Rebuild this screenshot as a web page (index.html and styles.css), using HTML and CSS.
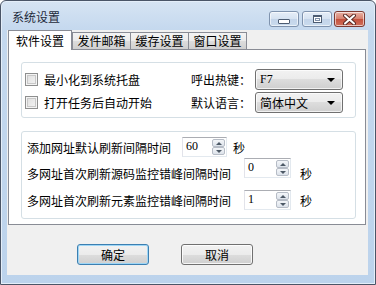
FILE: index.html
```html
<!DOCTYPE html>
<html lang="zh-CN">
<head>
  <meta charset="utf-8">
  <title>系统设置</title>
  <link rel="stylesheet" href="styles.css">
</head>
<body>
  <div class="window">
    <div class="titlebar">
      <span class="title">系统设置</span>
      <div class="caption">
        <span class="cap-btn cap-min"><span class="glyph-min"></span></span>
        <span class="cap-btn cap-max"><span class="glyph-max"></span></span>
        <span class="cap-btn cap-close">
          <svg width="13" height="11" viewBox="0 0 13 11">
            <path d="M2 1.5 L11 9.5 M11 1.5 L2 9.5" stroke="#5a2a24" stroke-width="4" stroke-linecap="round"/>
            <path d="M2 1.5 L11 9.5 M11 1.5 L2 9.5" stroke="#fff" stroke-width="2" stroke-linecap="round"/>
          </svg>
        </span>
      </div>
    </div>

    <div class="client">
      <div class="tabs">
        <span class="tab active">软件设置</span>
        <span class="tab">发件邮箱</span>
        <span class="tab">缓存设置</span>
        <span class="tab">窗口设置</span>
      </div>

      <div class="panel">
        <div class="group group-general">
          <div class="row">
            <label class="check"><span class="box"></span>最小化到系统托盘</label>
            <span class="field-label">呼出热键：</span>
            <span class="combo"><span class="combo-text latin">F7</span><span class="arrow"></span></span>
          </div>
          <div class="row">
            <label class="check"><span class="box"></span>打开任务后自动开始</label>
            <span class="field-label">默认语言：</span>
            <span class="combo"><span class="combo-text">简体中文</span><span class="arrow"></span></span>
          </div>
        </div>

        <div class="group group-refresh">
          <div class="line line-1">
            <span class="text">添加网址默认刷新间隔时间</span>
            <span class="spin"><span class="spin-value">60</span><span class="spin-btns"><span class="up"></span><span class="down"></span></span></span>
            <span class="unit">秒</span>
          </div>
          <div class="line line-2">
            <span class="text">多网址首次刷新源码监控错峰间隔时间</span>
            <span class="spin"><span class="spin-value">0</span><span class="spin-btns"><span class="up"></span><span class="down"></span></span></span>
            <span class="unit">秒</span>
          </div>
          <div class="line line-3">
            <span class="text">多网址首次刷新元素监控错峰间隔时间</span>
            <span class="spin"><span class="spin-value">1</span><span class="spin-btns"><span class="up"></span><span class="down"></span></span></span>
            <span class="unit">秒</span>
          </div>
        </div>
      </div>

      <div class="actions">
        <button class="btn btn-default">确定</button>
        <button class="btn">取消</button>
      </div>
    </div>
  </div>
</body>
</html>
```

FILE: styles.css
```css
body {
  margin: 0;
  background: #fff;
  font-family: "Noto Sans CJK SC", "Noto Sans", sans-serif;
  font-size: 12px;
  color: #000;
}
.window {
  box-sizing: border-box;
  width: 376px;
  height: 285px;
  padding: 0 7px 9px 6px;
  border: 1px solid #4a5567;
  border-radius: 6px 6px 0 0;
  background: linear-gradient(#d6e4f3, #c4d8ee 30px, #bcd3ec);
  box-shadow: inset 0 0 0 1px #e4eef9;
}
.titlebar {
  display: flex;
  justify-content: space-between;
  height: 29px;
}
.title {
  margin-left: 5px;
  padding-top: 9px;
  line-height: 14px;
  color: #1e2a3a;
}
.caption {
  display: flex;
  gap: 3px;
  margin-top: 10px;
  margin-right: 3px;
}
.cap-btn {
  box-sizing: border-box;
  display: flex;
  align-items: center;
  justify-content: center;
  width: 30px;
  height: 16px;
  border: 1px solid #7f93ae;
  border-radius: 3px;
  background: linear-gradient(#e6eef8, #d5e2f1 50%, #c3d4e9 50%, #c9dbee);
  box-shadow: inset 0 0 0 1px rgba(255,255,255,0.6);
}
.cap-close {
  width: 31px;
  margin-left: -1px;
  border-color: #7d3a32;
  background: linear-gradient(#e8b2a6, #d6806e 50%, #c4503c 50%, #d0705c);
}
.glyph-min {
  width: 10px;
  height: 3px;
  margin-top: 5px;
  border: 1px solid #4c5c72;
  background: #fff;
  border-radius: 1px;
}
.glyph-max {
  box-sizing: border-box;
  width: 9px;
  height: 8px;
  border: 1px solid #4c5c72;
  border-top-width: 2px;
  background: #fff;
  box-shadow: inset 0 0 0 1px #fff, inset 0 0 0 2px #7d8ea6;
}
.client {
  width: 361px;
  height: 245px;
  background: #f0f0f0;
}
.tabs {
  display: flex;
  align-items: flex-end;
  height: 19px;
  padding-left: 1px;
}
.tab {
  box-sizing: border-box;
  width: 59px;
  height: 17px;
  margin-left: -1px;
  border: 1px solid #898c95;
  border-bottom: none;
  background: linear-gradient(#f3f3f3, #ebebeb 50%, #dddddd 50%, #d0d0d0);
  text-align: center;
  line-height: 16px;
}
.tab.active {
  position: relative;
  z-index: 1;
  width: 64px;
  height: 20px;
  margin-left: 0;
  margin-right: 1px;
  margin-bottom: -1px;
  background: #fff;
  line-height: 20px;
}
.panel {
  box-sizing: border-box;
  width: 358px;
  height: 176px;
  margin-left: 1px;
  padding: 12px 0 0 12px;
  border: 1px solid #898c95;
  background: #fff;
}
.group {
  box-sizing: border-box;
  width: 335px;
  border: 1px solid #d5dfe5;
  border-radius: 3px;
}
.group-general {
  height: 56px;
  padding: 6px 0 0 3px;
}
.row {
  display: flex;
  align-items: center;
  height: 21px;
  margin-bottom: 2px;
}
.check {
  display: flex;
  align-items: center;
  gap: 6px;
  width: 166px;
}
.box {
  box-sizing: border-box;
  width: 13px;
  height: 13px;
  border: 1px solid #8e8f8f;
  background: linear-gradient(135deg, #dcdcdc, #f6f6f6);
  box-shadow: inset 0 0 0 1px #f4f4f4, inset 0 0 0 2px #c8c8c8;
}
.field-label {
  width: 64px;
}
.combo {
  box-sizing: border-box;
  display: flex;
  align-items: center;
  justify-content: space-between;
  width: 88px;
  height: 21px;
  padding: 0 7px 0 4px;
  border: 1px solid #707070;
  border-radius: 3px;
  background: linear-gradient(#f2f2f2, #ebebeb 50%, #dddddd 50%, #cfcfcf);
  box-shadow: inset 0 0 0 1px rgba(255,255,255,0.7);
}
.latin {
  font-family: "Liberation Serif", serif;
  font-size: 12px;
}
.arrow {
  width: 0;
  height: 0;
  border-left: 4px solid transparent;
  border-right: 4px solid transparent;
  border-top: 4px solid #000;
}
.group-refresh {
  height: 88px;
  margin-top: 13px;
  padding: 5px 0 0 5px;
}
.line {
  display: flex;
  align-items: center;
}
.line-1 {
  height: 20px;
}
.line-2 {
  height: 30px;
  margin-top: 1px;
}
.line-3 {
  height: 20px;
  margin-top: 2px;
}
.spin {
  box-sizing: border-box;
  display: flex;
  justify-content: space-between;
  width: 47px;
  height: 20px;
  margin-left: 13px;
  padding: 1px;
  border: 1px solid #abadb3;
  border-color: #abadb3 #e3e9ef #e3e9ef #e2e3ea;
  background: #fff;
}
.line-1 .spin {
  width: 45px;
  margin-left: 11px;
}
.line-2 .spin {
  align-self: flex-start;
}
.spin-value {
  padding-left: 2px;
  font-family: "Liberation Serif", serif;
  line-height: 14px;
}
.spin-btns {
  display: flex;
  flex-direction: column;
  width: 13px;
}
.spin-btns span {
  box-sizing: border-box;
  display: flex;
  align-items: center;
  justify-content: center;
  flex: 1;
  border: 1px solid #b6bcc6;
  border-radius: 2px;
  background: linear-gradient(#f4f6f9, #dce2ea);
}
.spin-btns .up::after,
.spin-btns .down::after {
  content: "";
  border-left: 3px solid transparent;
  border-right: 3px solid transparent;
}
.spin-btns .up::after {
  border-bottom: 3px solid #4d5966;
}
.spin-btns .down::after {
  border-top: 3px solid #4d5966;
}
.unit {
  margin-left: 6px;
}
.line-2 .unit,
.line-3 .unit {
  margin-left: 9px;
}
.actions {
  display: flex;
  gap: 32px;
  margin-top: 19px;
  padding-left: 70px;
}
.btn {
  box-sizing: border-box;
  width: 72px;
  height: 21px;
  padding: 0;
  border: 1px solid #707070;
  border-radius: 3px;
  background: linear-gradient(#f2f2f2, #ebebeb 50%, #dddddd 50%, #cfcfcf);
  box-shadow: inset 0 0 0 1px rgba(255,255,255,0.8);
  font-family: "Noto Sans CJK SC", sans-serif;
  font-size: 12px;
  color: #000;
}
.btn-default {
  border-color: #3c7fb1;
  box-shadow: inset 0 0 0 1px #9ed6f6;
}
```
